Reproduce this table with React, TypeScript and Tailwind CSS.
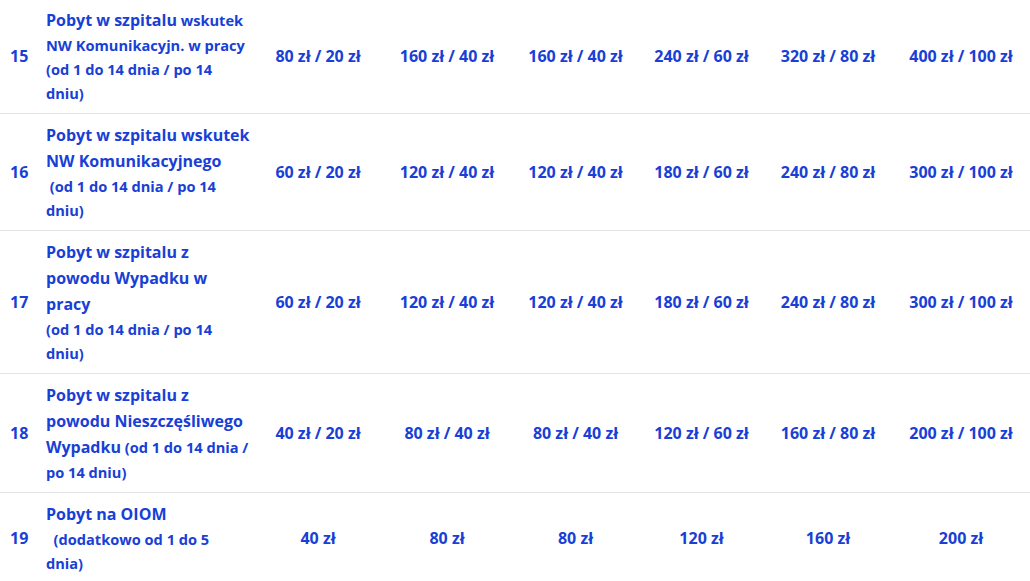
import React from 'react';

type Row = {
  no: number;
  desc: React.ReactNode;
  values: string[];
};

const T = ({ children }: { children: React.ReactNode }) => (
  <span className="text-[16px] leading-[26px]">{children}</span>
);

const rows: Row[] = [
  {
    no: 15,
    desc: (
      <>
        <T>Pobyt w szpitalu</T> wskutek NW Komunikacyjn. w pracy
        <br />
        (od 1 do 14 dnia / po 14 dniu)
      </>
    ),
    values: ['80 zł / 20 zł', '160 zł / 40 zł', '160 zł / 40 zł', '240 zł / 60 zł', '320 zł / 80 zł', '400 zł / 100 zł'],
  },
  {
    no: 16,
    desc: (
      <>
        <T>Pobyt w szpitalu wskutek NW Komunikacyjnego</T>
        <br />
        &nbsp;(od 1 do 14 dnia / po 14 dniu)
      </>
    ),
    values: ['60 zł / 20 zł', '120 zł / 40 zł', '120 zł / 40 zł', '180 zł / 60 zł', '240 zł / 80 zł', '300 zł / 100 zł'],
  },
  {
    no: 17,
    desc: (
      <>
        <T>Pobyt w szpitalu z powodu Wypadku w pracy</T>
        <br />
        (od 1 do 14 dnia / po 14 dniu)
      </>
    ),
    values: ['60 zł / 20 zł', '120 zł / 40 zł', '120 zł / 40 zł', '180 zł / 60 zł', '240 zł / 80 zł', '300 zł / 100 zł'],
  },
  {
    no: 18,
    desc: (
      <>
        <T>Pobyt w szpitalu z powodu Nieszczęśliwego Wypadku</T> (od 1 do 14 dnia / po 14 dniu)
      </>
    ),
    values: ['40 zł / 20 zł', '80 zł / 40 zł', '80 zł / 40 zł', '120 zł / 60 zł', '160 zł / 80 zł', '200 zł / 100 zł'],
  },
  {
    no: 19,
    desc: (
      <>
        <T>Pobyt na OIOM</T>
        <br />
        &nbsp;&nbsp;(dodatkowo od 1 do 5
        <br />
        dnia)
      </>
    ),
    values: ['40 zł', '80 zł', '80 zł', '120 zł', '160 zł', '200 zł'],
  },
];

export default function App() {
  return (
    <div className="w-[1030px] h-[581px] overflow-hidden bg-white font-['Open_Sans',sans-serif] font-bold text-[#1840d6]">
      <div className="-mt-[1px]">
        {rows.map((row, i) => (
          <div
            key={row.no}
            className={`grid grid-cols-[46px_208px_128px_130px_127px_125px_128px_138px] items-center ${
              i < rows.length - 1 ? 'border-b border-[#e4e4e4]' : ''
            }`}
          >
            <div className="pl-[10px] text-[16px]">{row.no}</div>
            <div className="py-[8px] pr-[3px]">
              <div className="w-[205px] text-[14.6px] leading-6">{row.desc}</div>
            </div>
            {row.values.map((v, j) => (
              <div key={j} className="text-center text-[16px] whitespace-nowrap">
                {v}
              </div>
            ))}
          </div>
        ))}
      </div>
    </div>
  );
}
